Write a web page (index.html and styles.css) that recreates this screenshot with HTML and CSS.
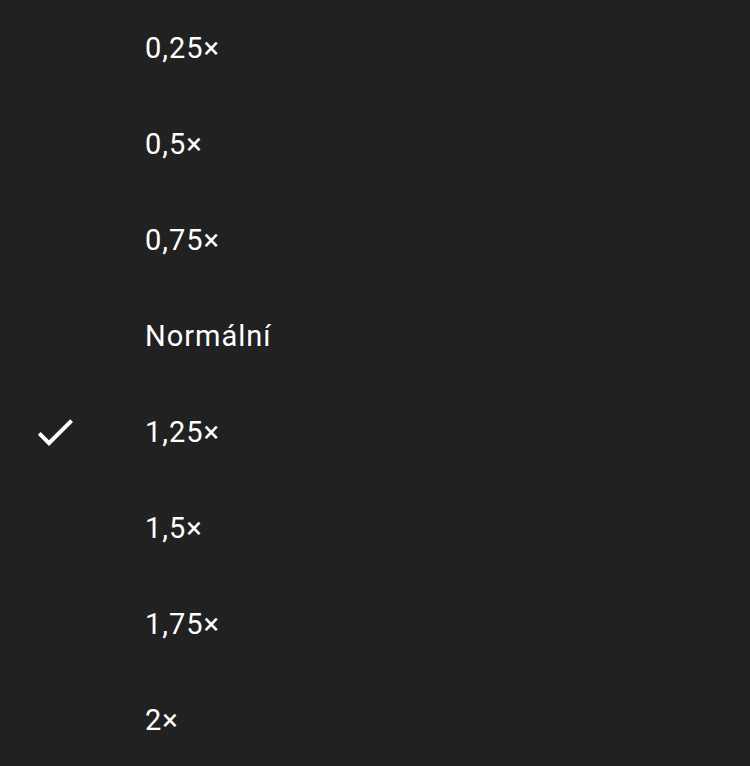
FILE: index.html
```html
<!DOCTYPE html>
<html lang="cs">
<head>
    <meta charset="UTF-8">
    <meta name="viewport" content="width=device-width, initial-scale=1.0">
    <title>Rychlost přehrávání</title>
    <link rel="stylesheet" href="styles.css">
</head>
<body>
    <ul class="speed-menu">
        <li class="speed-item"><span class="check"></span><span class="label">0,25×</span></li>
        <li class="speed-item"><span class="check"></span><span class="label">0,5×</span></li>
        <li class="speed-item"><span class="check"></span><span class="label">0,75×</span></li>
        <li class="speed-item"><span class="check"></span><span class="label">Normální</span></li>
        <li class="speed-item selected">
            <span class="check">
                <svg viewBox="0 0 24 24" width="48" height="48"><path d="M9 16.17L4.83 12l-1.42 1.41L9 19 21 7l-1.41-1.41z" fill="currentColor"/></svg>
            </span>
            <span class="label">1,25×</span>
        </li>
        <li class="speed-item"><span class="check"></span><span class="label">1,5×</span></li>
        <li class="speed-item"><span class="check"></span><span class="label">1,75×</span></li>
        <li class="speed-item"><span class="check"></span><span class="label">2×</span></li>
    </ul>
</body>
</html>
```

FILE: styles.css
```css
html, body {
    margin: 0;
    padding: 0;
    background-color: #212121;
}

body {
    font-family: Roboto, "Noto Sans", sans-serif;
    color: #ffffff;
    height: 766px;
    overflow: hidden;
}

.speed-menu {
    list-style: none;
    margin: 0;
    padding: 0;
}

.speed-item {
    display: flex;
    align-items: center;
    height: 96px;
    font-size: 29px;
    letter-spacing: 1px;
}

.check {
    width: 48px;
    height: 48px;
    margin-left: 31px;
    margin-right: 66px;
    display: flex;
}

.label {
    line-height: 1;
}
```
